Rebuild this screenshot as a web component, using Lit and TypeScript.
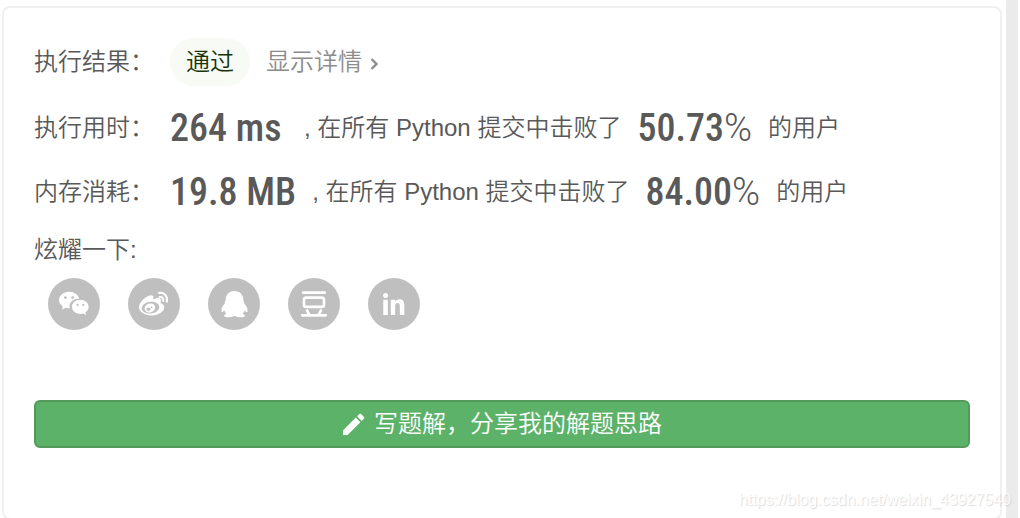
import { LitElement, html, css, svg } from "lit";
import { customElement } from "lit/decorators.js";

const icons = [
  {
    name: "微信",
    art: svg`
      <path fill="#fff" d="M21 13.800c-5.600 0-10 3.700-10 8.300 0 2.700 1.400 4.800 3.800 6.400l-.9 3.200 3.600-2c1.200.3 2.300.5 3.500.5h.8c-.2-.7-.3-1.300-.3-2 0-4.200 4-7.500 8.800-7.500h.9c-.9-4-5-6.900-10.200-6.900z"/>
      <path fill="#fff" d="M40.600 28.800c0-4-3.800-7-8.300-7s-8.400 3.100-8.400 7 3.800 7.100 8.400 7.100c1 0 2-.2 3-.4l2.900 1.700-.8-2.700c2-1.400 3.200-3.400 3.200-5.700z"/>
      <g fill="#bfbfbf"><circle cx="17.400" cy="19.600" r="1.400"/><circle cx="24.600" cy="19.600" r="1.400"/><circle cx="29.600" cy="26.900" r="1.100"/><circle cx="35.200" cy="26.900" r="1.100"/></g>`,
  },
  {
    name: "微博",
    art: svg`
      <path fill="#fff" d="M33.300 25.500c-.6-.2-1-.3-.7-1 .6-1.500.5-2.700-.1-3.500-1.100-1.300-3.600-1.200-6.400 0-.8.300-1.200.3-.9-.5.400-1.300.2-2.200-.4-2.700-1.800-1.500-6 .2-9.700 3.700-2.700 2.600-4.200 5.400-4.200 7.800 0 4.600 5.900 8.100 12.400 8.100 7.400 0 12.900-4 12.900-7.900 0-2.100-1.100-3.400-2.900-4z"/>
      <ellipse cx="22.500" cy="29.600" rx="8.900" ry="5.900" fill="#bfbfbf" transform="rotate(-7 22.500 29.600)"/>
      <ellipse cx="21.900" cy="30" rx="5.400" ry="4.500" fill="#fff" transform="rotate(-18 21.900 30)"/>
      <ellipse cx="20.500" cy="31.200" rx="1.900" ry="1.600" fill="#bfbfbf"/><circle cx="23.600" cy="29.400" r=".8" fill="#bfbfbf"/>
      <path fill="none" stroke="#fff" stroke-width="2" stroke-linecap="round" d="M31 15c5-1 9.200 3.300 7.800 8.800M31.700 19c2.400-.5 4.100 1.500 3.500 4"/>`,
  },
  {
    name: "QQ",
    art: svg`<path fill="#fff" d="M26.500 13c-5.500 0-8.800 4-8.800 8.700 0 .8-.6 1.400-.8 2.200-.2.600 0 1.200-.1 1.700-1.700 2-3.400 4.600-3.400 6.700 0 1.200.3 2 .8 2 .7 0 1.500-1.100 2-2 .4 1.300 1.200 2.500 2.200 3.500-1.500.5-2.300 1.200-2.300 1.900 0 1 2.200 1.600 5 1.600 2.300 0 4.200-.5 4.900-1.200h1c.7.7 2.600 1.200 4.900 1.200 2.800 0 5-.6 5-1.600 0-.7-.8-1.400-2.300-1.900 1-1 1.800-2.200 2.200-3.500.5.9 1.300 2 2 2 .5 0 .8-.8.8-2 0-2.100-1.700-4.700-3.400-6.700-.1-.5.100-1.100-.1-1.700-.2-.8-.8-1.400-.8-2.200 0-4.700-3.300-8.700-8.800-8.700z"/>`,
  },
  {
    name: "豆瓣",
    art: svg`
      <path fill="none" stroke="#fff" stroke-width="2.700" stroke-linecap="round" d="M15.200 14.700h21.600M14.200 37.300h23.600"/>
      <rect x="16" y="19.600" width="20" height="9.300" rx="2.200" fill="none" stroke="#fff" stroke-width="2.700"/>
      <path fill="none" stroke="#fff" stroke-width="2.700" d="M18.600 31.500l2.500 5M33.400 31.500l-2.500 5"/>`,
  },
  {
    name: "领英",
    art: svg`
      <circle cx="17.600" cy="17.500" r="2.500" fill="#fff"/>
      <path fill="#fff" d="M15.300 21.700h4.500v15.300h-4.500zM22.800 21.700h4.300v2.100c.8-1.500 2.300-2.500 4.200-2.500 4.100 0 5 2.700 5 6.500v9.200h-4.500v-8.300c0-1.900-.2-3.600-2.200-3.600s-2.400 1.700-2.400 3.500v8.400h-4.400z"/>`,
  },
];

const stats = [
  { label: "执行用时：", value: "264 ms", percent: "50.73" },
  { label: "内存消耗：", value: "19.8 MB", percent: "84.00" },
];

@customElement("app-root")
export class AppRoot extends LitElement {
  static styles = css`
    :host {
      display: block;
      font: 350 24px/36px "Liberation Sans", "Noto Sans CJK SC", sans-serif;
      color: #595959;
    }
    .page {
      position: relative;
      display: flex;
      min-height: 100vh;
      box-sizing: border-box;
      padding-left: 2px;
      background: #fff;
      overflow: hidden;
    }
    .card {
      flex: 1;
      min-width: 0;
      box-sizing: border-box;
      margin-top: 6px;
      padding: 30px 30px 70px;
      border: 2px solid #f0f0f0;
      border-radius: 8px;
    }
    .gutter {
      width: 12px;
      margin: 0 2px 0 4px;
      background: #ebebeb;
    }
    .row {
      display: flex;
      align-items: center;
      gap: 16px;
      height: 48px;
      white-space: nowrap;
    }
    .stat {
      height: 64px;
    }
    .stats {
      margin-top: 10px;
    }
    .label {
      width: 120px;
    }
    .status {
      padding: 6px 16px;
      border-radius: 24px;
      background: #f7faf5;
      color: #1a3309;
    }
    .detail {
      display: flex;
      align-items: center;
      gap: 8px;
      color: #8c8c8c;
      text-decoration: none;
    }
    .chevron {
      margin-top: 4px;
    }
    .value {
      min-width: 118px;
      font: 500 38px/48px "Roboto Condensed", "Liberation Sans Narrow", Roboto, sans-serif;
    }
    .percent {
      min-width: 114px;
    }
    .light {
      font-family: Roboto, sans-serif;
      font-weight: 300;
    }
    .share-title {
      margin: 8px 0 10px;
      font: inherit;
    }
    .share {
      display: flex;
      gap: 28px;
      padding-left: 14px;
    }
    .icon-button {
      display: block;
      width: 52px;
      height: 52px;
      padding: 0;
      border: 0;
      border-radius: 50%;
      background: #bfbfbf;
      cursor: pointer;
    }
    .icon {
      display: block;
      width: 100%;
      height: 100%;
    }
    .write {
      display: flex;
      align-items: center;
      justify-content: center;
      gap: 8px;
      width: 100%;
      height: 48px;
      margin-top: 70px;
      padding: 0;
      border: 2px solid #52995a;
      border-radius: 6px;
      background: #5db269;
      color: #fff;
      font: inherit;
      cursor: pointer;
    }
    .watermark {
      position: absolute;
      right: 9px;
      bottom: 10px;
      font: 400 16px/20px "Liberation Sans", sans-serif;
      color: #fff;
      text-shadow: 1px 1px 1px #ccc;
      opacity: 0.7;
    }
  `;

  render() {
    return html`
      <div class="page">
        <main class="card">
          <div class="row">
            <span class="label">执行结果：</span>
            <span class="status">通过</span>
            <a class="detail" href="#detail"
              >显示详情<svg class="chevron" width="9" height="14" viewBox="0 0 9 14" aria-hidden="true">
                <path d="M1.500 2l5 5-5 5" fill="none" stroke="#8c8c8c" stroke-width="2.400" />
              </svg>
            </a>
          </div>
          <div class="stats">
            ${stats.map(
              (s) => html`
                <div class="row stat">
                  <span class="label">${s.label}</span>
                  <span class="value">${s.value}</span>
                  <span>, 在所有 Python 提交中击败了</span>
                  <span class="value percent">${s.percent}<span class="light">%</span></span>
                  <span>的用户</span>
                </div>
              `
            )}
          </div>
          <h2 class="share-title">炫耀一下:</h2>
          <div class="share">
            ${icons.map(
              (i) => html`
                <button class="icon-button" aria-label=${i.name}>
                  <svg class="icon" viewBox="0 0 52 52" aria-hidden="true">${i.art}</svg>
                </button>
              `
            )}
          </div>
          <button class="write">
            <svg width="24" height="24" viewBox="0 0 24 24" aria-hidden="true">
              <path fill="#fff" d="M1 18.400V23h4.600L18.400 10.200l-4.600-4.600zM22 6.600c.5-.5.5-1.200 0-1.700L19.100 2c-.5-.5-1.200-.5-1.700 0l-2.300 2.300 4.600 4.600z" />
            </svg>
            写题解，分享我的解题思路
          </button>
        </main>
        <div class="gutter"></div>
        <div class="watermark">https://blog.csdn.net/weixin_43927540</div>
      </div>
    `;
  }
}
